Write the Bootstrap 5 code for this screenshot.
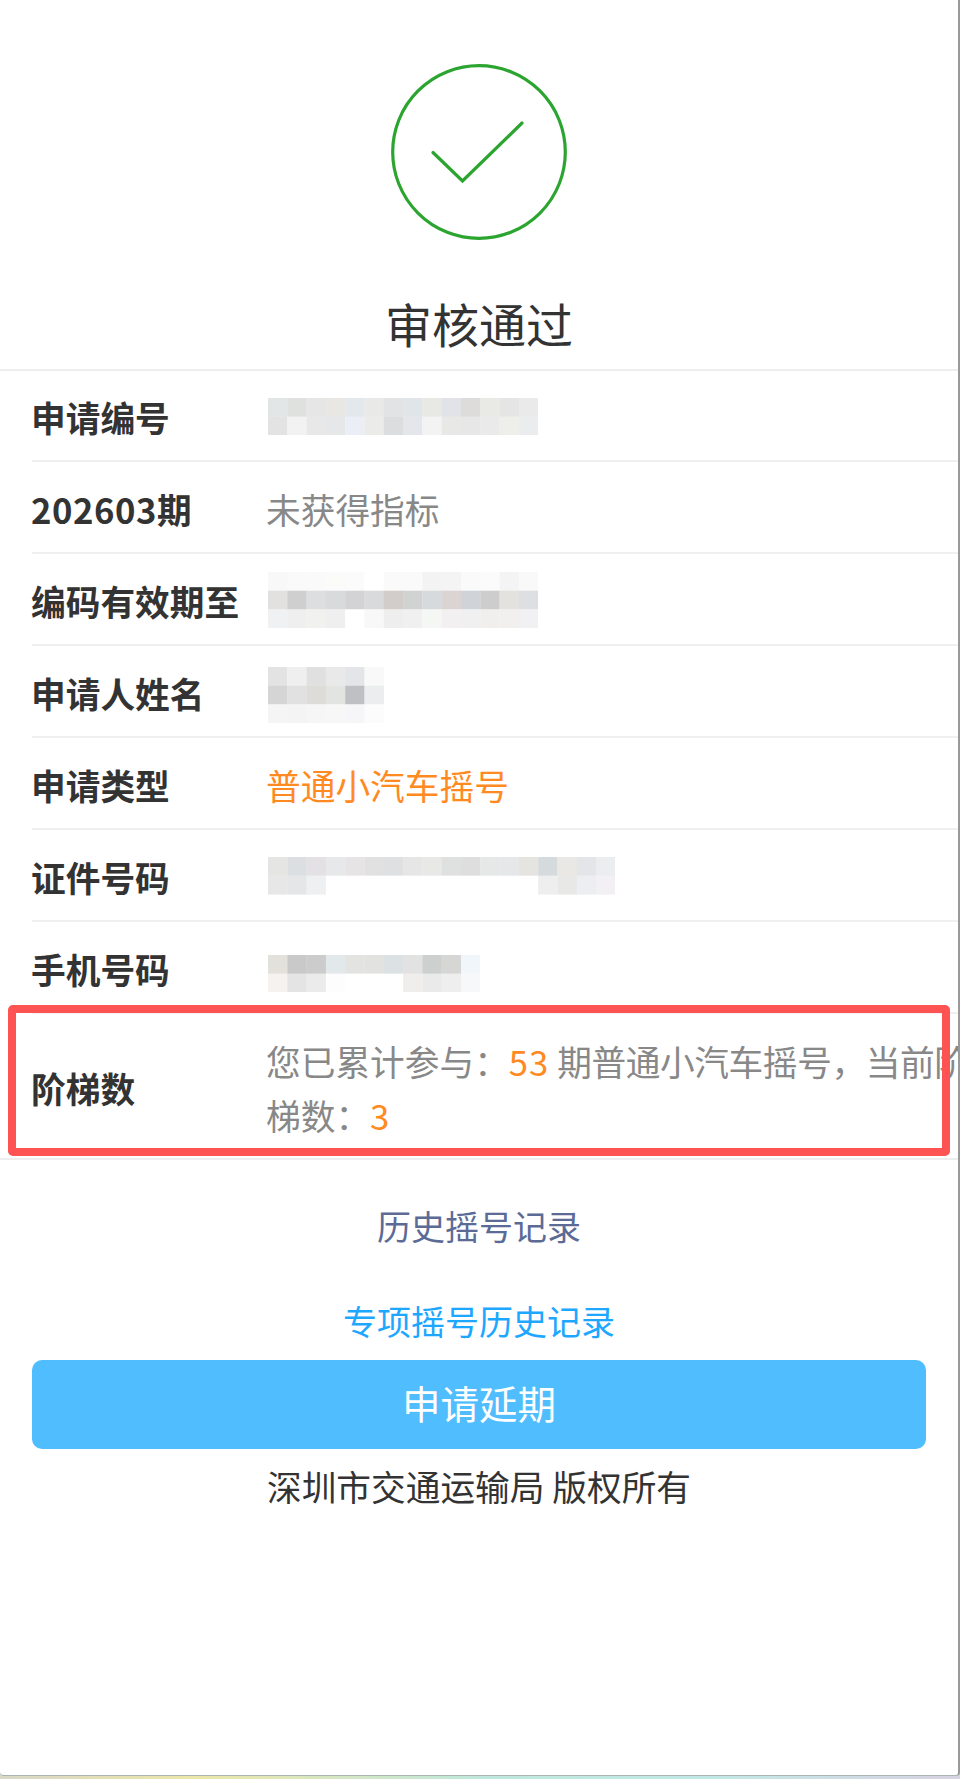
<!DOCTYPE html>
<html lang="zh-CN">
<head>
<meta charset="utf-8">
<title>审核通过</title>
<link href="https://cdn.jsdelivr.net/npm/bootstrap@5.3.0/dist/css/bootstrap.min.css" rel="stylesheet">
<style>
html, body { height: 100%; }
body {
  margin: 0;
  overflow: hidden;
  font-family: "Noto Sans CJK SC", "Noto Sans", sans-serif;
  background: linear-gradient(90deg, #d8d8c8 0%, #ece6a8 20%, #bfe8dc 50%, #c2e8e6 75%, #d8d2e4 100%);
}
.shot-frame {
  position: relative;
  height: 1776px;
  background: #fff;
  overflow: hidden;
  border-right: 2px solid #999;
  border-bottom: 1px solid #a9b5b0;
  border-radius: 0 0 4px 4px;
}
.status-mark { display: block; margin: 64px auto 0; }
.status-title { margin: 53px 0 16px; font-size: 47px; line-height: 60px; color: #333; font-weight: 400; }
.info-list { border-top: 2px solid #eee; border-bottom: 2px solid #eee; }
.info-row { height: 92px; margin-left: 32px; padding-top: 4px; border-bottom: 2px solid #f0f0f0; font-size: 34.7px; }
.info-row:first-child { height: 91px; }
.info-row:last-child { height: 144px; border-bottom: 0; }
.info-label { flex: 0 0 235px; margin-left: -1px; font-weight: 700; color: #333; }
.info-value { color: #888; line-height: 54px; white-space: nowrap; }
.info-hot { color: #ff8a22; }
.digit-wide { letter-spacing: 1px; }
.label-digits { letter-spacing: .55px; }
.tight-run { letter-spacing: -.4px; }
.mosaic { display: block; margin: 0 0 2px 2px; filter: blur(.5px); }
.shift-name { margin-top: 6px; }
.shift-phone { margin-top: 11px; }
.bottom-link { display: block; font-size: 34px; line-height: 50px; text-decoration: none; }
.link-history { margin-top: 41px; color: #5c6b96; }
.link-special { margin-top: 45px; color: #1ea7ff; }
.apply-btn {
  display: block;
  width: 894px;
  height: 89px;
  margin: 14px 0 0 32px;
  padding: 0 0 6px;
  font-size: 38.5px;
  line-height: 80px;
  color: #fff;
  background: #4fbdfe;
  border: 0;
  border-radius: 10px;
}
.copyright { margin: 12px 0 0; font-size: 34.7px; line-height: 50px; color: #333; }
.notice-box {
  position: absolute;
  left: 8px;
  top: 1005px;
  width: 942px;
  height: 151px;
  border: 8.5px solid #fe5353;
  border-radius: 5px;
  pointer-events: none;
}
</style>
</head>
<body>
<div class="shot-frame">
  <svg class="status-mark" width="176" height="176" viewBox="0 0 176 176" aria-hidden="true">
    <circle cx="88" cy="88" r="86.3" fill="none" stroke="#2ba52f" stroke-width="3.2"/>
    <path d="M42 88.5 L71.5 117 L131 59" fill="none" stroke="#2ba52f" stroke-width="3.2" stroke-linecap="round" stroke-linejoin="miter"/>
  </svg>
  <h1 class="status-title text-center">审核通过</h1>

  <div class="info-list">
    <div class="info-row d-flex align-items-center">
      <div class="info-label">申请编号</div>
      <svg class="mosaic" data-rows="e3e6e6,dfe1df,e6e6e6,e8e7e4,e3e8ed,e9e9e7,e2e3e5,e0e5e9,e8e8e5,e1e3e8,dddcdb,e9e9e6,e5e5e6,eaeaea|e3e3e3,f2f2f2,e8e8e8,e6e7e8,ebeff5,ebebe9,dcdddf,e3e7ec,f3f3f3,e8e8e6,e7e7e7,eaeaea,eeeeea,ebecee"></svg>
    </div>
    <div class="info-row d-flex align-items-center">
      <div class="info-label"><span class="label-digits">202603</span>期</div>
      <div class="info-value">未获得指标</div>
    </div>
    <div class="info-row d-flex align-items-center">
      <div class="info-label">编码有效期至</div>
      <svg class="mosaic" data-rows="f8f8f8,fafafa,fafafa,fbfbf9,fbfbfb,ffffff,fafafa,fafafa,f3f3f3,f4f4f4,fafafa,fbfbfb,f4f4f4,f9f9f9|e2e1df,cfcfd0,dcdedf,d8dadc,d3d3d5,d8dadc,d2cdca,d1d3d2,d6dadd,dbd4d2,d0d4d8,cdcdcd,e4e2df,dddfe3|f0f1f3,efefef,f1f1ef,efefef,ffffff,f8f8f8,eeeeee,f0f0f0,f5f7f5,f3f0f1,f1f0f0,f1efed,f2f0ee,f1f0f3"></svg>
    </div>
    <div class="info-row d-flex align-items-center">
      <div class="info-label">申请人姓名</div>
      <svg class="mosaic shift-name" data-rows="e3e3e3,efefef,e0e0e0,e9e9e9,e4e5e8,f9f9f9|d5d5d5,e1e1e1,dddcd9,e2e4e2,bfc0c4,ecedef|f5f5f5,f4f4f4,f6f6f6,f6f7f6,f6f6f8,fbfcfb"></svg>
    </div>
    <div class="info-row d-flex align-items-center">
      <div class="info-label">申请类型</div>
      <div class="info-value info-hot">普通小汽车摇号</div>
    </div>
    <div class="info-row d-flex align-items-center">
      <div class="info-label">证件号码</div>
      <svg class="mosaic" data-rows="e5e5e3,dcdfe2,e3e1e3,e6e8ea,e6e4e5,e1e1e2,dfe0e2,e6e6e6,e8e9e6,dfe0e0,dedede,e6e7e7,e5e7e9,e5e4e1,d5dbdc,e9e8e5,e3e5e9,ecedef|e7e7e7,e4e6e8,eef0f2,ffffff,ffffff,ffffff,ffffff,ffffff,ffffff,ffffff,ffffff,ffffff,ffffff,ffffff,eeeeee,e8e8e7,eceef1,f2f0f2"></svg>
    </div>
    <div class="info-row d-flex align-items-center">
      <div class="info-label">手机号码</div>
      <svg class="mosaic shift-phone" data-rows="e3e1dc,c9c9c9,cccccc,e3e8eb,e3e3e1,e2e2e0,dce1e4,e2e2e2,cdd0cf,d6d6d4,f0f6f9|f6f2f0,e4e4e4,ebebeb,fdfdfd,ffffff,ffffff,ffffff,efeeec,eaeaea,eeeeee,f6f8fa"></svg>
    </div>
    <div class="info-row d-flex align-items-center">
      <div class="info-label">阶梯数</div>
      <div class="info-value">您已累计参与：<span class="info-hot digit-wide">53</span> <span class="tight-run">期普通小汽车摇号，当前阶</span><br>梯数：<span class="info-hot">3</span></div>
    </div>
  </div>

  <a class="bottom-link link-history text-center" href="#">历史摇号记录</a>
  <a class="bottom-link link-special text-center" href="#">专项摇号历史记录</a>
  <button type="button" class="btn apply-btn">申请延期</button>
  <p class="copyright text-center">深圳市交通运输局 版权所有</p>

  <div class="notice-box"></div>
</div>
<script>
document.querySelectorAll('.mosaic').forEach(function (svg) {
  var rows = svg.dataset.rows.split('|'), w = 19.3, h = 18.7, out = '';
  var cols = rows[0].split(',').length;
  rows.forEach(function (row, y) {
    row.split(',').forEach(function (c, x) {
      out += '<rect x="' + (x * w) + '" y="' + (y * h) + '" width="' + (w + .2) + '" height="' + (h + .2) + '" fill="#' + c + '"/>';
    });
  });
  svg.setAttribute('width', cols * w);
  svg.setAttribute('height', rows.length * h);
  svg.setAttribute('viewBox', '0 0 ' + (cols * w) + ' ' + (rows.length * h));
  svg.innerHTML = out;
});
</script>
<script src="https://cdn.jsdelivr.net/npm/bootstrap@5.3.0/dist/js/bootstrap.bundle.min.js"></script>
</body>
</html>
